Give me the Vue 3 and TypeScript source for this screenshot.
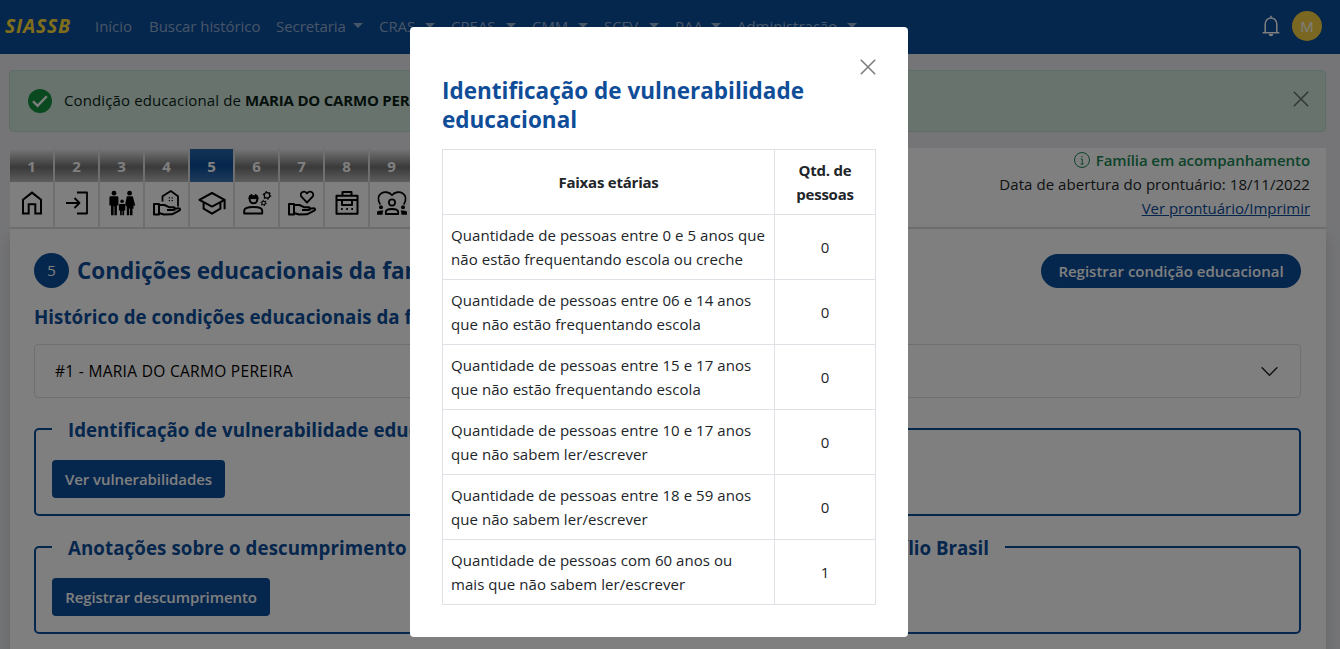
<script setup lang="ts">
interface NavItem { label: string; dropdown: boolean; width: number }
interface Tab { id: number; icon: string }
interface Row { label: string; total: number }

const nav: NavItem[] = [
  { label: 'Início', dropdown: false, width: 38 },
  { label: 'Buscar histórico', dropdown: false, width: 111 },
  { label: 'Secretaria', dropdown: true, width: 87 },
  { label: 'CRAS', dropdown: true, width: 56 },
  { label: 'CREAS', dropdown: true, width: 65 },
  { label: 'CMM', dropdown: true, width: 56 },
  { label: 'SCFV', dropdown: true, width: 55 },
  { label: 'PAA', dropdown: true, width: 46 },
  { label: 'Administração', dropdown: true, width: 120 },
]

const tabs: Tab[] = [
  { id: 1, icon: 'home' },
  { id: 2, icon: 'enter' },
  { id: 3, icon: 'family' },
  { id: 4, icon: 'housing' },
  { id: 5, icon: 'education' },
  { id: 6, icon: 'work' },
  { id: 7, icon: 'health' },
  { id: 8, icon: 'benefits' },
  { id: 9, icon: 'community' },
]
const activeTab = 5

const rows: Row[] = [
  { label: 'Quantidade de pessoas entre 0 e 5 anos que não estão frequentando escola ou creche', total: 0 },
  { label: 'Quantidade de pessoas entre 06 e 14 anos que não estão frequentando escola', total: 0 },
  { label: 'Quantidade de pessoas entre 15 e 17 anos que não estão frequentando escola', total: 0 },
  { label: 'Quantidade de pessoas entre 10 e 17 anos que não sabem ler/escrever', total: 0 },
  { label: 'Quantidade de pessoas entre 18 e 59 anos que não sabem ler/escrever', total: 0 },
  { label: 'Quantidade de pessoas com 60 anos ou mais que não sabem ler/escrever', total: 1 },
]
</script>

<template>
  <div class="page">
    <header class="navbar">
      <span class="brand">SIASSB</span>
      <nav class="links">
        <a v-for="item in nav" :key="item.label" class="link" :style="{ width: item.width + 'px' }">
          <span>{{ item.label }}</span><i v-if="item.dropdown" class="caret"></i>
        </a>
      </nav>
      <svg class="bell" viewBox="0 0 18 22" fill="none" stroke="currentColor" stroke-width="1.5">
        <path d="M3.2 17.5V8.8a5.8 5.8 0 0 1 11.6 0v8.7M.7 17.8h16.6M9 3V.8" />
        <path d="M6.8 19h4.4a2.2 2.2 0 0 1-4.4 0z" fill="currentColor" stroke="none" />
      </svg>
      <span class="avatar">M</span>
    </header>

    <section class="alert">
      <svg class="check" viewBox="0 0 24 24">
        <circle cx="12" cy="12" r="12" fill="#14913f" />
        <path d="M5 12.2l4.6 4.6 9.2-9.5" fill="none" stroke="#fff" stroke-width="2.3" />
      </svg>
      <p>Condição educacional de <b>MARIA DO CARMO PEREIRA</b></p>
      <svg class="close" viewBox="0 0 16 16"><path d="M.8.8l14.4 14.4M15.2.8L.8 15.2" /></svg>
    </section>

    <section class="record">
      <div class="tabs">
        <div v-for="tab in tabs" :key="tab.id" class="tab" :class="{ active: tab.id === activeTab }">
          <span class="number">{{ tab.id }}</span>
          <span class="symbol">
            <svg viewBox="0 0 32 28" fill="none" stroke="#000" stroke-width="2" stroke-linejoin="round">
              <template v-if="tab.icon === 'home'">
                <path d="M7 24.5V10.8L16 3.6l9 7.2v13.7h-5.7v-9.3h-6.6v9.3z" stroke-linejoin="miter" />
              </template>
              <template v-else-if="tab.icon === 'enter'">
                <path d="M16 3.5h10v21H16M5 14h13M13.5 9l5 5-5 5" stroke-width="1.8" />
              </template>
              <g v-else-if="tab.icon === 'family'" fill="#000" stroke="none">
                <circle cx="8" cy="4.2" r="2.4" />
                <path d="M3.4 8.4q0-1.2 1.2-1.2h6.6q1.2 0 1.2 1.2v8h-1.5v9.9H8.4v-9h-.8v9H5v-9.9H3.4z" />
                <circle cx="23.6" cy="4.2" r="2.4" />
                <path d="M20.9 7.2h5q.9 0 1.1.8l2.2 8.4-1.6.5-.9-2.5 1.2 5.2h-1.4v6.7H24v-6.7h-.8v6.7h-2.4V18l-1.7-2.4z" />
                <circle cx="16.1" cy="12.3" r="1.8" />
                <path d="M12.9 16q0-1.1 1.1-1.1h4.2q1.1 0 1.1 1.1v5.4h-1.2v4.9h-1.7v-4.4h-.6v4.4h-1.7v-4.9h-1.2z" />
              </g>
              <template v-else-if="tab.icon === 'housing'">
                <path d="M11.5 12.5V7.2L19.8 2l7.2 5.2v10.3" stroke-width="1.8" />
                <path d="M17.8 8.3h1.2v1.2h-1.2zM20.6 8.3h1.2v1.2h-1.2zM17.8 11.1h1.2v1.2h-1.2zM20.6 11.1h1.2v1.2h-1.2z" fill="#000" stroke="none" />
                <path d="M3 15h5v10.5H3zM8 16h5.5l5 2.3h4c2 0 2 2.7 0 2.7h-6.5M22.5 20l5.2-.8c1.6 0 1.8 1.8.5 2.5L21 25.3l-8 .2-5-1.5" />
              </template>
              <template v-else-if="tab.icon === 'education'">
                <path d="M3.4 10.8L16 4l12.6 6.8L16 17.6z" />
                <path d="M7.6 13.3v6.4L16 24.7l8.4-5v-6.4M28.6 10.8v9.4" />
              </template>
              <template v-else-if="tab.icon === 'work'">
                <path d="M3.2 24.6v-2.8c0-5 18-5 18 0v2.8z" />
                <path d="M8.7 9.5v1a3.8 3.8 0 0 0 7.6 0v-1" />
                <path d="M7.8 9.6q0-3.9 3-4.2v1.4h3.4V5.4q3 .3 3 4.2z" fill="#000" stroke-width="1" />
                <circle cx="26" cy="6.4" r="2.7" stroke-width="1.2" />
                <circle cx="26" cy="6.4" r="3.7" stroke-width="1.3" stroke-dasharray="1.5 2.37" />
                <circle cx="22.6" cy="14" r="1.8" stroke-width="1.1" />
                <circle cx="22.6" cy="14" r="2.6" stroke-width="1.1" stroke-dasharray="1.1 1.62" />
              </template>
              <template v-else-if="tab.icon === 'health'">
                <path d="M21 13.5l-5.6-5.8c-2.4-3.4 2.4-7.2 5.6-3.3 3.2-3.9 8-.1 5.6 3.3z" stroke-width="1.8" />
                <path d="M3 15h5v10.5H3zM8 16h5.5l5 2.3h4c2 0 2 2.7 0 2.7h-6.5M22.5 20l5.2-.8c1.6 0 1.8 1.8.5 2.5L21 25.3l-8 .2-5-1.5" />
              </template>
              <template v-else-if="tab.icon === 'benefits'">
                <path d="M11.5 6.7V3h9v3.7M5.5 6.7h21v18.1h-21zM5.5 11h21M11 11h10v5H11z" />
                <path d="M10 20h1.7M15.2 20h1.7M20.3 20H22" />
              </template>
              <template v-else>
                <path d="M4.2 15.5C-2 5.2 9.8-.8 16 6.2 22.2-.8 34 5.2 27.8 15.5" stroke-width="1.8" />
                <circle cx="16" cy="13.5" r="3.1" stroke-width="1.8" />
                <path d="M9.8 25v-2c0-4 12.4-4 12.4 0v2z" stroke-width="1.8" />
                <g fill="#000" stroke="none">
                  <circle cx="5" cy="18.3" r="2" /><path d="M1 25.8v-2.5q0-2.2 6.4-1.7-.9 1.8-.8 4.2z" />
                  <circle cx="27" cy="18.3" r="2" /><path d="M31 25.8v-2.5q0-2.2-6.4-1.7.9 1.8.8 4.2z" />
                </g>
              </template>
            </svg>
          </span>
        </div>
      </div>
      <div class="status">
        <div class="following">
          <svg viewBox="0 0 16 16" fill="none" stroke="currentColor"><circle cx="8" cy="8" r="7.5" /><path d="M6.7 7h1.5v5M6.5 12h3.2M8 4v1.4" /></svg>
          <span>Família em acompanhamento</span>
        </div>
        <div class="opened">Data de abertura do prontuário: 18/11/2022</div>
        <div><a class="print">Ver prontuário/Imprimir</a></div>
      </div>
    </section>

    <main class="card">
      <div class="title-row">
        <span class="step">5</span>
        <h4>Condições educacionais da família</h4>
        <button class="pill">Registrar condição educacional</button>
      </div>
      <h5 class="history">Histórico de condições educacionais da família</h5>
      <div class="accordion">
        <span>#1 - MARIA DO CARMO PEREIRA</span>
        <svg viewBox="0 0 16 16" fill="none" stroke="#212529" stroke-linecap="round" stroke-linejoin="round"><path d="M1 4.5l7 7 7-7" /></svg>
      </div>
      <fieldset>
        <legend class="vulnerability">Identificação de vulnerabilidade educacional</legend>
        <button class="btn first">Ver vulnerabilidades</button>
      </fieldset>
      <fieldset>
        <legend class="notes"><span class="lead">Anotações sobre o descumprimento</span> <span>Auxílio Brasil</span></legend>
        <button class="btn second">Registrar descumprimento</button>
      </fieldset>
    </main>

    <div class="backdrop">
      <div class="modal">
        <svg class="close" viewBox="0 0 16 16"><path d="M.8.8l14.4 14.4M15.2.8L.8 15.2" /></svg>
        <h4>Identificação de vulnerabilidade educacional</h4>
        <table>
          <thead>
            <tr><th>Faixas etárias</th><th class="amount">Qtd. de pessoas</th></tr>
          </thead>
          <tbody>
            <tr v-for="row in rows" :key="row.label"><td>{{ row.label }}</td><td class="amount">{{ row.total }}</td></tr>
          </tbody>
        </table>
      </div>
    </div>
  </div>
</template>

<style>
body { overflow: hidden; background: #eaebee; }
</style>

<style scoped>
* { box-sizing: border-box; }
.page { position: relative; width: 1340px; height: 649px; overflow: hidden; background: #eaebee; color: #212529; font: 15px/24px "Open Sans", "Noto Sans", sans-serif; }
h4, h5, p { margin: 0; }
h4 { color: #0f4d99; font-size: 22.5px; line-height: 28.8px; font-weight: 700; }
h5, legend { color: #0a4c9a; font-size: 18.7px; line-height: 24px; font-weight: 700; }
button { border: 0; background: #0a4c9a; color: #fff; font: 600 15px/24px "Open Sans", sans-serif; padding: 0; white-space: nowrap; }

.navbar { height: 54px; background: #0a4c9a; display: flex; align-items: center; padding: 0 18px 2px 5px; }
.brand { width: 90px; color: #ffdc38; font-size: 19.5px; letter-spacing: .7px; font-weight: 700; font-style: italic; }
.links { display: flex; gap: 16px; flex: 1; color: rgba(255, 255, 255, .55); }
.link { display: flex; justify-content: space-between; align-items: center; white-space: nowrap; letter-spacing: -.05px; }
.caret { border: 5px solid transparent; border-top-color: currentColor; border-bottom: 0; margin-top: -1px; }
.bell { width: 18px; height: 22px; color: #fff; margin-right: 12px; }
.avatar { width: 30px; height: 30px; border-radius: 50%; background: #f4cf45; color: #fff; text-align: center; line-height: 30px; }

.alert { margin: 16px 14px 0 9px; height: 62px; border: 1px solid #badbcc; border-radius: 4px; background: #d1e7dd; color: #0a1f15; display: flex; align-items: center; padding: 0 16px 2px 18px; }
.check { width: 24px; height: 24px; margin-right: 12px; margin-top: 1px; }
.alert p { flex: 1; margin-top: -1px; letter-spacing: .12px; }
.alert b { letter-spacing: -.2px; }
.close { width: 16px; height: 16px; fill: none; stroke: #000; stroke-width: 1.6; opacity: .5; }
.alert .close { margin-top: -2px; }

.record { margin: 16px 14px 0 10px; height: 81px; background: #fff; border-bottom: 2px solid #dedfe2; display: flex; justify-content: space-between; }
.tabs { display: flex; background: #dedfe2; }
.tab { width: 45px; border-right: 2px solid #dedfe2; background: #fff; }
.number { display: block; height: 34px; line-height: 36px; text-align: center; font-weight: 700; color: #fff; background: linear-gradient(#eaebee 3%, #747474 56%, #bcbcbc); }
.active .number { background: linear-gradient(#eaebee 3%, #2a66ab 3%, #0a4c9a 52%, #3c76b5); }
.symbol { height: 44px; display: flex; align-items: center; justify-content: center; }
.symbol svg { width: 32px; height: 28px; margin-top: -3px; }
.status { text-align: right; padding-right: 16px; }
.following { display: flex; justify-content: flex-end; align-items: center; gap: 6px; color: #198754; font-weight: 600; letter-spacing: -.07px; }
.following svg { width: 16px; height: 16px; }
.opened { letter-spacing: .06px; }
.print { color: #0a4c9a; text-decoration: underline; letter-spacing: -.04px; }

.card { margin: 0 14px 0 10px; height: 440px; background: #fff; padding: 24px 25px 0 24px; box-shadow: 0 8px 16px rgba(0, 0, 0, .15); }
.title-row { display: flex; align-items: center; height: 36px; }
.step { width: 35px; height: 35px; border-radius: 50%; background: #0a4c9a; color: #fff; text-align: center; line-height: 35px; margin-right: 8px; margin-top: -2px; }
.title-row h4 { flex: 1; padding-top: 1px; letter-spacing: -.02px; }
.pill { width: 260px; height: 34px; border-radius: 17px; margin-top: -1px; }
.history { margin-top: 16px; letter-spacing: .05px; }
.accordion { margin: 15px 0 19px; height: 54px; border: 1px solid #dfdfdf; border-radius: 4px; display: flex; align-items: center; justify-content: space-between; padding: 0 22px 0 20px; font-size: 15.5px; letter-spacing: .3px; color: #000; }
.accordion svg { width: 17px; height: 17px; stroke-width: 1.4; }
fieldset { margin: 0 0 19px; border: 2px solid #0a4c9a; border-radius: 5px; padding: 19px 16px 16px; height: 99px; min-width: 0; }
legend { padding: 0 16px; white-space: nowrap; line-height: 26px; height: 24px; }
.notes { width: 953px; display: flex; justify-content: space-between; }
.lead { letter-spacing: .09px; }
.btn { display: block; height: 38px; border-radius: 4px; letter-spacing: -.08px; }
.first { width: 173px; }
.second { width: 218px; }

.backdrop { position: absolute; inset: 0; background: rgba(0, 0, 0, .5); display: flex; justify-content: center; align-items: flex-start; padding: 27px 22px 0 0; }
.modal { position: relative; width: 498px; height: 610px; background: #fff; border-radius: 4px; padding: 50px 32px 0; }
.modal .close { position: absolute; top: 32px; right: 32px; }
.modal table { margin-top: 14px; width: 434px; border-collapse: collapse; table-layout: fixed; }
td, th { border: 1px solid #dee2e6; height: 65px; padding: 8px; vertical-align: middle; }
td { letter-spacing: .06px; }
th { text-align: center; font-weight: 700; letter-spacing: -.22px; }
.amount { width: 101px; text-align: center; padding: 8px 16px; }
</style>
